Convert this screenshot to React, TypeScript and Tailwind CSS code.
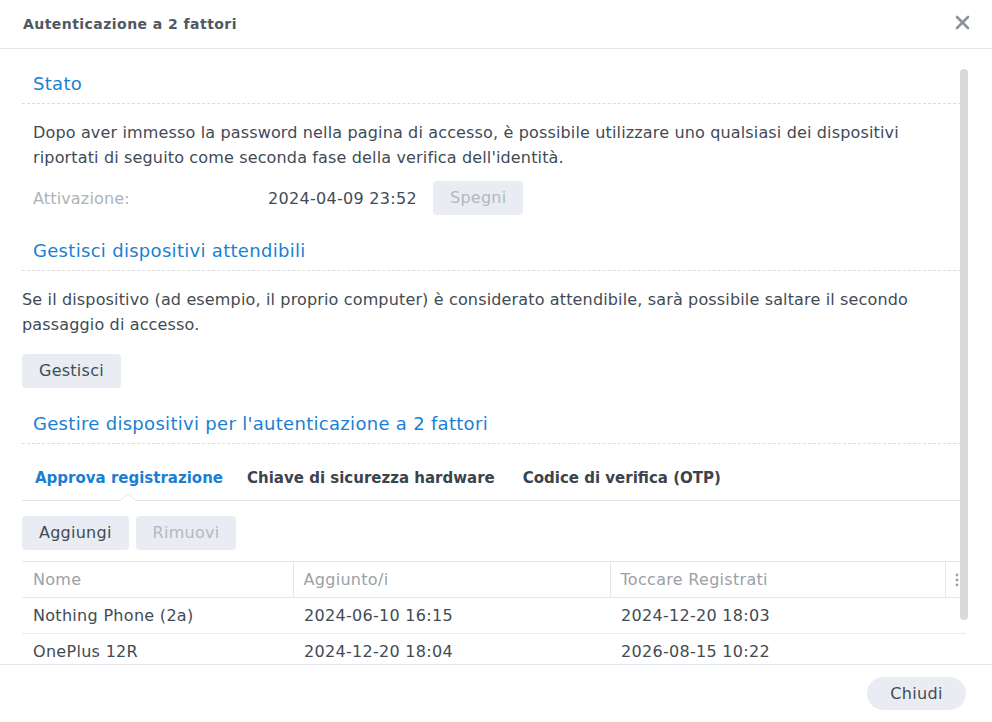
import React from "react";

const font = { fontFamily: '"DejaVu Sans", Verdana, sans-serif' };

const SectionTitle = ({ children }: { children: React.ReactNode }) => (
  <div className="border-b border-dashed border-[#d9dde2] pb-[7px] pl-[11px]">
    <h2 className="text-[18px] leading-[24px] tracking-[0.3px] text-[#1a7fd4]">{children}</h2>
  </div>
);

const Btn = ({
  children,
  disabled,
  className = "",
}: {
  children: React.ReactNode;
  disabled?: boolean;
  className?: string;
}) => (
  <button
    className={
      "h-[34px] rounded-[4px] bg-[#e9edf3] px-[17px] text-[16px] tracking-[0.25px] " +
      (disabled ? "text-[#b3b8be] " : "text-[#414b55] ") +
      className
    }
  >
    {children}
  </button>
);

const devices = [
  { name: "Nothing Phone (2a)", added: "2024-06-10 16:15", touched: "2024-12-20 18:03" },
  { name: "OnePlus 12R", added: "2024-12-20 18:04", touched: "2026-08-15 10:22" },
];

export default function App() {
  return (
    <div className="flex h-[722px] w-[992px] flex-col bg-white text-[#414b55]" style={font}>
      {/* header */}
      <div className="flex h-[49px] shrink-0 items-center justify-between border-b border-[#e3e7ec] pl-[23px] pr-[22px]">
        <h1 className="text-[14px] font-bold tracking-[0.45px] text-[#4e5862]">Autenticazione a 2 fattori</h1>
        <svg width="15" height="15" viewBox="0 0 15 15" className="mt-[-4px]">
          <path d="M2 2 L13 13 M13 2 L2 13" stroke="#8a939c" strokeWidth="2.6" strokeLinecap="round" />
        </svg>
      </div>

      {/* scrolling body */}
      <div className="relative mb-[7px] flex-1 overflow-hidden">
        <div className="pl-[22px] pr-[26px] pt-[23px] text-[16px] tracking-[0.15px]">
          <SectionTitle>Stato</SectionTitle>
          <div className="pl-[11px] pt-[16px]">
            <p className="leading-[25px]">
              Dopo aver immesso la password nella pagina di accesso, è possibile utilizzare uno qualsiasi dei dispositivi
              riportati di seguito come seconda fase della verifica dell'identità.
            </p>
            <div className="mt-[11px] flex items-center">
              <span className="mt-[2px] w-[235px] text-[#aeb3b8]">Attivazione:</span>
              <span className="mr-[16px] mt-[2px] tracking-[0.3px]">2024-04-09 23:52</span>
              <Btn disabled>Spegni</Btn>
            </div>
          </div>

          <div className="mt-[24px]">
            <SectionTitle>Gestisci dispositivi attendibili</SectionTitle>
          </div>
          <p className="pt-[16px] leading-[25px]">
            Se il dispositivo (ad esempio, il proprio computer) è considerato attendibile, sarà possibile saltare il secondo
            passaggio di accesso.
          </p>
          <Btn className="mt-[17px]">Gestisci</Btn>

          <div className="mt-[24px]">
            <SectionTitle>Gestire dispositivi per l'autenticazione a 2 fattori</SectionTitle>
          </div>

          {/* tabs */}
          <div className="relative mt-[12px] flex h-[45px] items-center gap-[24px] border-b border-[#dfe3e8] pl-[13px] text-[15px] font-bold tracking-normal">
            <span className="text-[#1a7fd4]">Approva registrazione</span>
            <span className="text-[#3b444d]">Chiave di sicurezza hardware</span>
            <span className="ml-[4px] text-[#3b444d]">Codice di verifica (OTP)</span>
            <svg width="16" height="8" viewBox="0 0 16 8" className="absolute bottom-[-1px] left-[98px]">
              <path d="M0 7.5 L8 0.5 L16 7.5" fill="white" stroke="#dfe3e8" strokeWidth="1" />
              <rect x="1" y="7" width="14" height="2" fill="white" />
            </svg>
          </div>

          <div className="mt-[15px] flex gap-[7px]">
            <Btn>Aggiungi</Btn>
            <Btn disabled>Rimuovi</Btn>
          </div>

          {/* device table */}
          <table className="mt-[11px] w-full table-fixed border-collapse tracking-[0.3px]">
            <colgroup>
              <col className="w-[271px]" />
              <col className="w-[317px]" />
              <col className="w-[335px]" />
              <col />
            </colgroup>
            <thead>
              <tr className="h-[36px] border-y border-[#e4e7eb] text-left text-[#9ba1a7]">
                <th className="pl-[11px] font-normal">Nome</th>
                <th className="border-l border-[#e4e7eb] pl-[10px] font-normal">Aggiunto/i</th>
                <th className="border-l border-[#e4e7eb] pl-[10px] font-normal">Toccare Registrati</th>
                <th className="border-l border-[#e4e7eb]">
                  <svg width="4" height="14" viewBox="0 0 4 14" className="ml-[9px]">
                    <circle cx="2" cy="2" r="1.4" fill="#9ba1a7" />
                    <circle cx="2" cy="7" r="1.4" fill="#9ba1a7" />
                    <circle cx="2" cy="12" r="1.4" fill="#9ba1a7" />
                  </svg>
                </th>
              </tr>
            </thead>
            <tbody>
              {devices.map((d) => (
                <tr key={d.name} className="h-[36px] border-b border-[#e9ecef]">
                  <td className="pl-[11px]">{d.name}</td>
                  <td className="pl-[11px]">{d.added}</td>
                  <td className="pl-[11px]">{d.touched}</td>
                  <td />
                </tr>
              ))}
            </tbody>
          </table>
        </div>

        {/* scrollbar */}
        <div className="absolute right-[24px] top-[20px] h-[551px] w-[8px] rounded-full bg-[#d9d9d9]" />
      </div>

      {/* footer */}
      <div className="flex h-[58px] shrink-0 items-center justify-end border-t border-[#e3e7ec] pr-[26px]">
        <button className="h-[33px] w-[99px] rounded-full bg-[#e9edf3] text-[16px] tracking-[0.3px] text-[#414b55]">
          Chiudi
        </button>
      </div>
    </div>
  );
}
